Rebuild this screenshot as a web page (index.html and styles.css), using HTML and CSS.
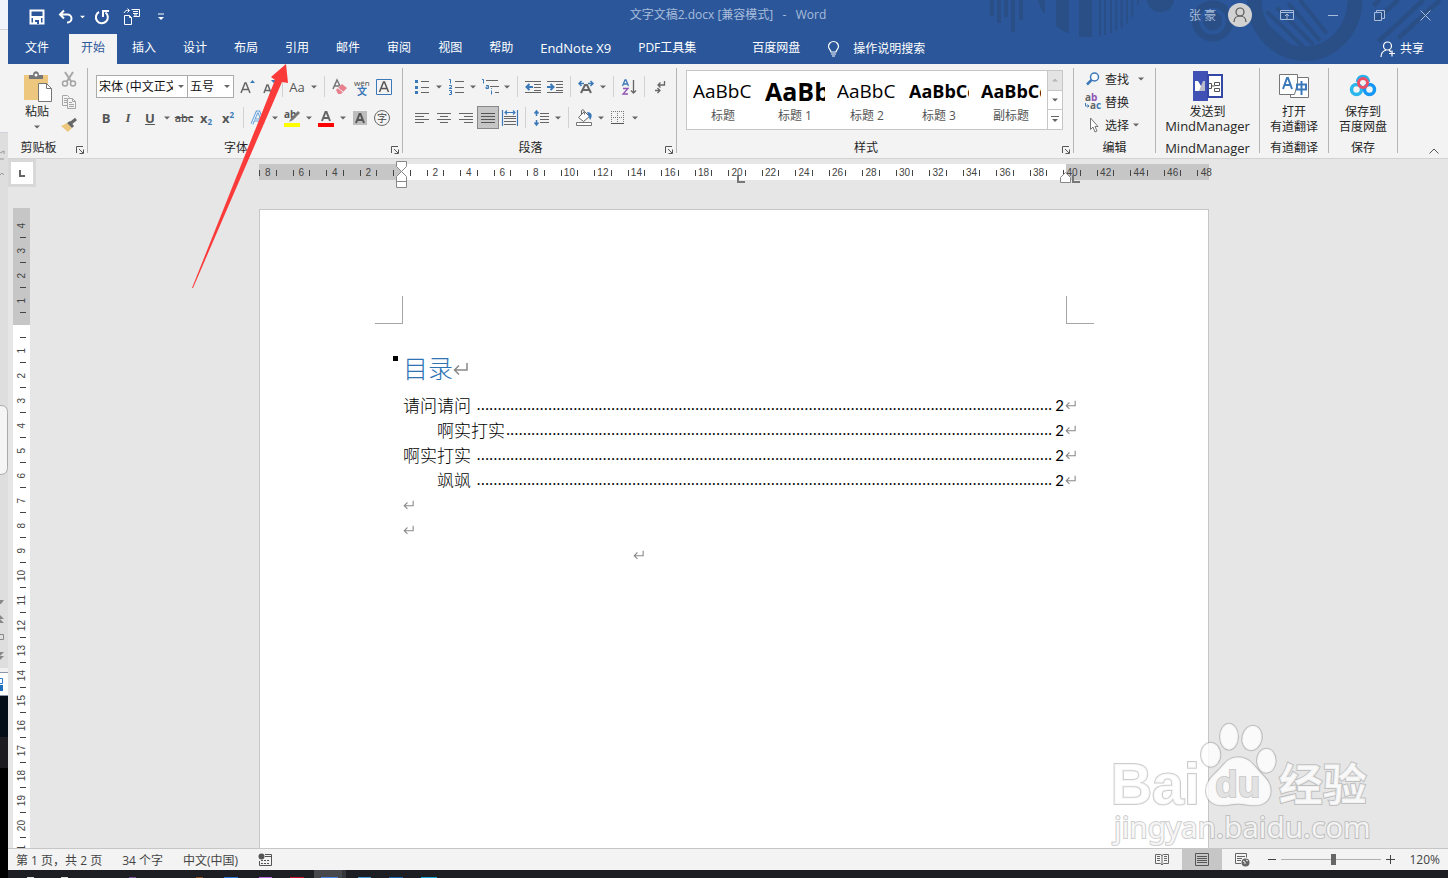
FILE: index.html
```html
<!DOCTYPE html>
<html lang="zh-CN">
<head>
    <meta charset="UTF-8">
    <meta name="viewport" content="width=device-width, initial-scale=1.0">
    <title>文字文稿2.docx - Word</title>
    <link rel="stylesheet" href="styles.css">
</head>
<body>
    <!-- shared symbols -->
    <svg class="defs" aria-hidden="true">
        <symbol id="ret" viewBox="0 0 15 14"><path d="M14 1v7H1.500M6 3.500L1.500 8L6 12.500" fill="none" stroke="currentColor" stroke-width="1.500"/></symbol>
        <symbol id="down" viewBox="0 0 6 4"><path d="M0 .500h6L3 3.500z" fill="currentColor"/></symbol>
        <symbol id="launch" viewBox="0 0 8 8"><path d="M.500 7V.500H7M3 3l4 4M7.500 3.500v4h-4" fill="none" stroke="currentColor"/></symbol>
    </svg>

    <aside class="behind">
        <svg width="8" height="878" viewBox="0 0 8 878">
            <path d="M0 0h8v30H0z" fill="#f2f4fb"/>
            <path d="M0 30h8v103H0z" fill="#f3f3f3"/>
            <path d="M0 29h8v1H0zM0 132h8v1H0z" fill="#cfd2d8"/>
            <path d="M0 133h8v535H0z" fill="#dedede"/>
            <path d="M0 153l4-2v3M0 159h4M0 175l2-2 2 2" fill="none" stroke="#999"/>
            <path d="M0 405.500c5 0 7.500 2 7.500 7v55c0 5-3 7-7.500 7" fill="#f5f5f5" stroke="#aaa"/>
            <path d="M0 600h4l-3 4H0zM0 615l4 4H0zM0 619l4 4H0zM0 652h4l-4 4zM0 656h4l-4 4z" fill="#888"/>
            <path d="M0 634.500h3.500v5H0" fill="none" stroke="#888"/>
            <path d="M0 668h8v5H0z" fill="#f0f0f0"/>
            <path d="M0 673h8v23H0z" fill="#fff"/>
            <path d="M0 672.500h8M0 695.500h8" stroke="#8a97ab"/>
            <path d="M0 678.500h2.500v5H0" fill="none" stroke="#2b7cd3"/>
            <path d="M0 685h3v6H0z" fill="#1e6fc0"/>
            <path d="M0 696h8v41H0z" fill="#020d18"/>
            <path d="M0 737h8v31H0z" fill="#1c1c20"/>
        </svg>
    </aside>

    <div class="window">
        <header class="top">
            <svg class="pattern" viewBox="0 0 1464 192" aria-hidden="true">
                <g fill="#2a4f86">
                    <path d="M90 0h12v48H90zM111 0h12v69h-12zM132 0h12v51h-12zM153 0h12v96h-12zM177 0h12v60h-12z"/>
                    <path d="M234 0h21v43C245 32 238 16 234 0zM288 0h39v100c-14-4-28-12-39-22zM357 0h39v111h-39zM417 0h6v108h-6zM432 0h6v105h-6zM450 0h6v99h-6zM466 0h6v92h-6zM482 0h6v84h-6zM498 0h6v70h-6zM514 0h6v50h-6zM531 0h6v15h-6z"/>
                    <path d="M561 0h81c-3 22-20 37-41 37S564 22 561 0z"/>
                    <circle cx="758" cy="63" r="29"/>
                </g>
                <g fill="none" stroke="#2a4f86">
                    <circle cx="758" cy="63" r="51" stroke-width="22"/>
                    <path d="M883 0a150 160 0 0 0 302 0" stroke-width="44"/>
                    <path d="M900 60l85 75M920 35l110 105M950 22l110 112M985 10l95 112M1020 0l80 100" stroke-width="12"/>
                    <path d="M1240 18l18-18M1245 62l70-62M1255 125L1390 0M1315 115L1440 0" stroke-width="14"/>
                </g>
            </svg>
            <div class="titlebar">
                <div class="quick">
                    <button class="qbtn" aria-label="保存"><svg width="16" height="16" viewBox="0 0 16 16"><path d="M1.500 1.500h13v13h-13zM2 8h12" fill="none" stroke="#fff" stroke-width="2"/><path d="M4 9h8v6H4z" fill="#fff"/><path d="M6 11h4v4H8v-2H6z" fill="#2b579a"/></svg></button>
                    <button class="qbtn" aria-label="撤消"><svg width="16" height="16" viewBox="0 0 16 16"><path d="M6 1.500L2 5.500l4 4M2 5.500h7.500a4 4 0 0 1 0 8H9" fill="none" stroke="#fff" stroke-width="2"/></svg></button>
                    <button class="qcaret" aria-label="撤消列表"><svg width="5" height="4"><use href="#down"/></svg></button>
                    <button class="qbtn" aria-label="重复"><svg width="16" height="16" viewBox="0 0 16 16"><path d="M5 3A6 6 0 1 0 11.500 3.500M9 8V2h6" fill="none" stroke="#fff" stroke-width="2"/></svg></button>
                    <button class="qbtn wide" aria-label="比较文档"><svg width="18" height="18" viewBox="0 0 18 18"><path d="M1.500 7.500h5l2 2v7h-7zM6.500 7.500v2h2M8.500 1.500h8v7h-6M10 3.500h5M10 5.500h5M11 7h3M1 5c1-2.500 3-3 5-2.500M4.500.500l2 2-2 2" fill="none" stroke="#fff"/></svg></button>
                    <button class="qbtn wide" aria-label="自定义快速访问工具栏"><svg width="6" height="8" viewBox="0 0 6 8"><path d="M0 1h6" stroke="#fff"/><path d="M0 4h6L3 7z" fill="#fff"/></svg></button>
                </div>
                <div class="doc-title">文字文稿2.docx [兼容模式]&nbsp;&nbsp; -&nbsp;&nbsp; Word</div>
                <div class="account">
                    <span class="user">张 豪</span>
                    <svg class="avatar" width="24" height="24" viewBox="0 0 24 24"><circle cx="12" cy="12" r="12" fill="#d2d2d2"/><circle cx="12" cy="9" r="4" fill="none" stroke="#555" stroke-width="1.200"/><path d="M6 19c0-8 12-8 12 0" fill="none" stroke="#555" stroke-width="1.200"/></svg>
                    <button class="winbtn" aria-label="功能区显示选项"><svg width="14" height="12" viewBox="0 0 14 12"><path d="M.500 1.500h13v9H.500zM.500 3.500h13M7 10V5M5 7l2-2 2 2" fill="none" stroke="currentColor"/></svg></button>
                    <button class="winbtn" aria-label="最小化"><svg width="10" height="12" viewBox="0 0 10 12"><path d="M0 6.500h10" stroke="currentColor"/></svg></button>
                    <button class="winbtn" aria-label="还原"><svg width="11" height="11" viewBox="0 0 11 11"><path d="M.500 2.500h7v8h-7zM2.500 2.500v-2h8v8h-3" fill="none" stroke="currentColor"/></svg></button>
                    <button class="winbtn" aria-label="关闭"><svg width="11" height="11" viewBox="0 0 11 11"><path d="M.500.500l10 10M10.500.500l-10 10" stroke="currentColor"/></svg></button>
                </div>
            </div>
            <nav class="tabs">
                <a href="#" class="file">文件</a>
                <a href="#" class="active">开始</a>
                <a href="#">插入</a>
                <a href="#">设计</a>
                <a href="#">布局</a>
                <a href="#">引用</a>
                <a href="#">邮件</a>
                <a href="#">审阅</a>
                <a href="#">视图</a>
                <a href="#">帮助</a>
                <a href="#" class="latin">EndNote X9</a>
                <a href="#">PDF工具集</a>
                <a href="#" class="pan">百度网盘</a>
                <a href="#" class="tell"><svg width="13" height="16" viewBox="0 0 13 16"><path d="M4 11C4 9 1.500 8 1.500 5.500a5 5 0 0 1 10 0C11.500 8 9 9 9 11zM4 13h5M5 15h3" fill="none" stroke="#fff" stroke-width="1.200"/></svg>操作说明搜索</a>
                <a href="#" class="share"><svg width="16" height="17" viewBox="0 0 16 17"><circle cx="7.500" cy="5" r="4" fill="none" stroke="#fff" stroke-width="1.200"/><path d="M1 16c0-3 2-6 5-7M9 9l2 2M12 9.500v6M9 12.500h6" fill="none" stroke="#fff" stroke-width="1.200"/></svg>共享</a>
            </nav>
        </header>

        <section class="ribbon">
            <div class="group clipboard">
                <div class="body">
                    <button class="big paste">
                        <svg width="30" height="32" viewBox="0 0 30 32"><path d="M2 4h24v25H2z" fill="#ecc77d"/><path d="M7 8V4h4c0-5 6-5 6 0h4v4z" fill="#767676"/><circle cx="14" cy="4" r="1.500" fill="#fff"/><path d="M16.500 12.500h8l5 5v13h-13z" fill="#fff" stroke="#767676"/><path d="M24.500 12.500v5h5" fill="none" stroke="#767676"/></svg>
                        <span>粘贴</span>
                        <svg class="caret" width="6" height="4"><use href="#down"/></svg>
                    </button>
                    <div class="stack">
                        <button class="tool" aria-label="剪切"><svg width="16" height="16" viewBox="0 0 16 16"><path d="M4 1l6.500 10M12 1L5.500 11" stroke="#a6a6a6" stroke-width="2"/><circle cx="4" cy="12.500" r="2.500" fill="none" stroke="#a6a6a6" stroke-width="1.500"/><circle cx="12" cy="12.500" r="2.500" fill="none" stroke="#a6a6a6" stroke-width="1.500"/></svg></button>
                        <button class="tool" aria-label="复制"><svg width="16" height="16" viewBox="0 0 16 16"><path d="M6 11.500H1.500v-10h5l2 2M3 4.500h3M3 6.500h3M3 8.500h3M6.500 4.500h5l3 3v7h-8zM11.500 4.500v3h3M8 8.500h3M8 10.500h5M8 12.500h5" fill="none" stroke="#a6a6a6"/></svg></button>
                        <button class="tool" aria-label="格式刷"><svg width="18" height="16" viewBox="0 0 18 16"><path d="M1 9l6-3 5 5-4 4z" fill="#ecc77d"/><path d="M7 6l3-2 4 5-2 2z" fill="#666"/><path d="M11 6l5-4" stroke="#666" stroke-width="3"/></svg></button>
                    </div>
                </div>
                <div class="label">剪贴板<button class="launcher" aria-label="剪贴板窗格"><svg width="8" height="8"><use href="#launch"/></svg></button></div>
            </div>

            <div class="group font">
                <div class="rows">
                    <div class="row">
                        <div class="combo name"><select aria-label="字体"><option>宋体 (中文正文)</option></select></div>
                        <div class="combo size"><select aria-label="字号"><option>五号</option></select></div>
                        <button class="tool" aria-label="增大字号"><svg width="16" height="18" viewBox="0 0 16 18"><path d="M2 15L6 5h1l4 10M3.500 11.500h6" fill="none" stroke="#666" stroke-width="1.500"/><path d="M11 5h5l-2.500-3z" fill="#3c79b8"/></svg></button>
                        <button class="tool" aria-label="减小字号"><svg width="16" height="18" viewBox="0 0 16 18"><path d="M3 15L6 7h1l3 8M4 12.500h5" fill="none" stroke="#666" stroke-width="1.500"/><path d="M10 2h5l-2.500 3z" fill="#3c79b8"/></svg></button>
                        <i class="sep tight"></i>
                        <button class="tool text" aria-label="更改大小写">Aa</button>
                        <button class="drop" aria-label="大小写选项"><svg width="6" height="4"><use href="#down"/></svg></button>
                        <i class="sep"></i>
                        <button class="tool" aria-label="清除格式"><svg width="16" height="16" viewBox="0 0 16 16"><path d="M1 10l4-9 3 6M2.500 7H7" fill="none" stroke="#767676" stroke-width="1.500"/><path d="M4 11l6-6 5 4-6 6H6z" fill="#e8808e"/><path d="M6 9l5 4" stroke="#f2f2f2"/></svg></button>
                        <button class="tool" aria-label="拼音指南"><svg width="18" height="18" viewBox="0 0 18 18"><text x="1" y="8" class="t-wen">wén</text><text x="4" y="17" class="t-han">文</text></svg></button>
                        <button class="tool" aria-label="字符边框"><svg width="16" height="16" viewBox="0 0 16 16"><path d="M.500.500h15v15H.500z" fill="none" stroke="#3c79b8"/><path d="M3.500 13l4-10h1l4 10M5 9.500h6" fill="none" stroke="#555" stroke-width="1.500"/></svg></button>
                    </div>
                    <div class="row">
                        <button class="tool text bold">B</button>
                        <button class="tool text italic">I</button>
                        <button class="tool text under">U</button>
                        <button class="drop" aria-label="下划线选项"><svg width="6" height="4"><use href="#down"/></svg></button>
                        <button class="tool text strike">abc</button>
                        <button class="tool text bold" aria-label="下标">x<sub>2</sub></button>
                        <button class="tool text bold" aria-label="上标">x<sup>2</sup></button>
                        <i class="sep near"></i>
                        <button class="tool" aria-label="文本效果"><svg width="16" height="16" viewBox="0 0 16 16"><path d="M2 14L7 2h2l4 12M4.500 10h7" fill="none" stroke="#6ba3d8" stroke-width="3"/><path d="M2 14L7 2h2l4 12M4.500 10h7" fill="none" stroke="#f2f8ff"/></svg></button>
                        <button class="drop" aria-label="文本效果选项"><svg width="6" height="4"><use href="#down"/></svg></button>
                        <button class="tool" aria-label="突出显示"><svg width="18" height="18" viewBox="0 0 18 18"><text x="1" y="9" class="t-ab">ab</text><path d="M6 13l2-4 7-7 2 2-7 7z" fill="#767676"/><path d="M1 14h16v4H1z" fill="#ff0"/></svg></button>
                        <button class="drop" aria-label="突出显示选项"><svg width="6" height="4"><use href="#down"/></svg></button>
                        <button class="tool" aria-label="字体颜色"><svg width="16" height="18" viewBox="0 0 16 18"><path d="M4 12L7.500 3h1L12 12M5 9h6" fill="none" stroke="#666" stroke-width="2"/><path d="M0 14h16v4H0z" fill="#f00"/></svg></button>
                        <button class="drop" aria-label="颜色选项"><svg width="6" height="4"><use href="#down"/></svg></button>
                        <button class="tool" aria-label="字符底纹"><svg width="14" height="14" viewBox="0 0 14 14"><path d="M0 0h14v14H0z" fill="#bdbdbd"/><path d="M3 12L6.500 3h1L11 12M4 9h6" fill="none" stroke="#555" stroke-width="2"/></svg></button>
                        <button class="tool" aria-label="带圈字符"><svg width="16" height="16" viewBox="0 0 16 16"><circle cx="8" cy="8" r="7.500" fill="none" stroke="#666"/><text x="3" y="12" class="t-zi">字</text></svg></button>
                    </div>
                </div>
                <div class="label">字体<button class="launcher" aria-label="字体设置"><svg width="8" height="8"><use href="#launch"/></svg></button></div>
            </div>

            <div class="group para">
                <div class="rows">
                    <div class="row">
                        <button class="tool" aria-label="项目符号"><svg width="14" height="16" viewBox="0 0 14 16"><path d="M6 2.500h8M6 8.500h8M6 13.500h8" stroke="#666"/><path d="M0 1h3v3H0zM0 7h3v3H0zM0 12h3v3H0z" fill="#3c79b8"/></svg></button>
                        <button class="drop" aria-label="项目符号选项"><svg width="6" height="4"><use href="#down"/></svg></button>
                        <button class="tool" aria-label="编号"><svg width="15" height="17" viewBox="0 0 15 17"><path d="M6 3.500h9M6 9.500h9M6 14.500h9" stroke="#666"/><path d="M0 1.500h1.500v4M0 7.500h2.500v1.500L0 10.500h3M0 12.500h2.500v4H0M1 14.500h1.500" fill="none" stroke="#3c79b8"/></svg></button>
                        <button class="drop" aria-label="编号选项"><svg width="6" height="4"><use href="#down"/></svg></button>
                        <button class="tool" aria-label="多级列表"><svg width="17" height="16" viewBox="0 0 17 16"><path d="M4 1.500h12M8 7.500h9M13 13.500h4" stroke="#666"/><path d="M0 .500h1.500v4M4 6.500h2.500v3H4v-1.500h2.500M9 9.500h.900M9.500 11.500v4" fill="none" stroke="#3c79b8"/></svg></button>
                        <button class="drop" aria-label="多级列表选项"><svg width="6" height="4"><use href="#down"/></svg></button>
                        <i class="sep"></i>
                        <button class="tool" aria-label="减少缩进"><svg width="16" height="14" viewBox="0 0 16 14"><path d="M0 1.500h16M9 4.500h7M9 7.500h7M9 10.500h7M0 12.500h16" stroke="#666"/><path d="M8 7H2M4.500 4L1.500 7l3 3" fill="none" stroke="#3c79b8" stroke-width="2"/></svg></button>
                        <button class="tool" aria-label="增加缩进"><svg width="16" height="14" viewBox="0 0 16 14"><path d="M0 1.500h16M9 4.500h7M9 7.500h7M9 10.500h7M0 12.500h16" stroke="#666"/><path d="M0 7h6M3.500 4l3 3-3 3" fill="none" stroke="#3c79b8" stroke-width="2"/></svg></button>
                        <i class="sep"></i>
                        <button class="tool" aria-label="中文版式"><svg width="16" height="14" viewBox="0 0 16 14"><path d="M3 13l4-8h2l4 8M5 10h6" fill="none" stroke="#666" stroke-width="2"/><path d="M1 3.500h5M10 3.500h5M3.500 1L1 3.500 3.500 6M12.500 1L15 3.500 12.500 6" fill="none" stroke="#3c79b8" stroke-width="1.500"/></svg></button>
                        <button class="drop" aria-label="中文版式选项"><svg width="6" height="4"><use href="#down"/></svg></button>
                        <i class="sep"></i>
                        <button class="tool" aria-label="排序"><svg width="14" height="16" viewBox="0 0 14 16"><path d="M.500 7L3 1h1l2.500 6M1.500 5h4" fill="none" stroke="#3c79b8" stroke-width="1.300"/><path d="M1 9.500h5L1 15h5" fill="none" stroke="#9055b5" stroke-width="1.300"/><path d="M11.500 1v13M9 11.500l2.500 2.500 2.500-2.500" fill="none" stroke="#666" stroke-width="1.300"/></svg></button>
                        <i class="sep"></i>
                        <button class="tool" aria-label="显示编辑标记"><svg width="12" height="14" viewBox="0 0 12 14"><path d="M10.500 1v4H4M6.500 2.500L4 5l2.500 2.500M1 10.500h5M3.500 8L6 10.500 3.500 13" fill="none" stroke="#666" stroke-width="1.300"/></svg></button>
                    </div>
                    <div class="row">
                        <button class="tool" aria-label="左对齐"><svg width="14" height="12" viewBox="0 0 14 12"><path d="M0 1.500h14M0 4.500h9M0 7.500h14M0 10.500h9" stroke="#666"/></svg></button>
                        <button class="tool" aria-label="居中"><svg width="14" height="12" viewBox="0 0 14 12"><path d="M0 1.500h14M3 4.500h8M0 7.500h14M3 10.500h8" stroke="#666"/></svg></button>
                        <button class="tool" aria-label="右对齐"><svg width="14" height="12" viewBox="0 0 14 12"><path d="M0 1.500h14M5 4.500h9M0 7.500h14M5 10.500h9" stroke="#666"/></svg></button>
                        <button class="tool pressed" aria-label="两端对齐"><svg width="14" height="12" viewBox="0 0 14 12"><path d="M0 1.500h14M0 4.500h14M0 7.500h14M0 10.500h14" stroke="#555"/></svg></button>
                        <button class="tool" aria-label="分散对齐"><svg width="16" height="16" viewBox="0 0 16 16"><path d="M2 6.500h12M2 8.500h12M2 11.500h12M2 14.500h12" stroke="#666"/><path d="M.500 0v16M15.500 0v16M3 2.500h10M5 .500l-2 2 2 2M11 .500l2 2-2 2" fill="none" stroke="#3c79b8" stroke-width="1.200"/></svg></button>
                        <i class="sep"></i>
                        <button class="tool" aria-label="行距"><svg width="15" height="16" viewBox="0 0 15 16"><path d="M6 3.500h9M6 6.500h9M6 9.500h9M6 12.500h9" stroke="#666"/><path d="M2.500 1v5M2.500 10v5M.500 3.500l2-2.500 2 2.500M.500 12.500l2 2.500 2-2.500" fill="none" stroke="#3c79b8" stroke-width="1.500"/></svg></button>
                        <button class="drop" aria-label="行距选项"><svg width="6" height="4"><use href="#down"/></svg></button>
                        <i class="sep"></i>
                        <button class="tool" aria-label="底纹"><svg width="17" height="17" viewBox="0 0 17 17"><path d="M2.500 8.500l6-6 5 5-6 5z" fill="#fff" stroke="#666"/><path d="M5.500 5V1.500c2-2 3 0 3 4" fill="none" stroke="#666"/><path d="M11 3c5 0 6 4 3 8z" fill="#3c79b8"/><path d="M.500 13.500h15v3H.500z" fill="#fff" stroke="#767676"/></svg></button>
                        <button class="drop" aria-label="底纹选项"><svg width="6" height="4"><use href="#down"/></svg></button>
                        <button class="tool" aria-label="边框"><svg width="14" height="14" viewBox="0 0 14 14"><path d="M0 .500h13M0 6.500h13M.500 0v13M6.500 0v13M12.500 0v13" stroke="#767676" stroke-dasharray="1 1"/><path d="M0 12.500h13" stroke="#555"/></svg></button>
                        <button class="drop" aria-label="边框选项"><svg width="6" height="4"><use href="#down"/></svg></button>
                    </div>
                </div>
                <div class="label">段落<button class="launcher" aria-label="段落设置"><svg width="8" height="8"><use href="#launch"/></svg></button></div>
            </div>

            <div class="group styles">
                <div class="gallery">
                    <button class="style"><b class="normal">AaBbC</b><span>标题</span></button>
                    <button class="style"><b class="h1">AaBb</b><span>标题 1</span></button>
                    <button class="style"><b class="normal">AaBbC</b><span>标题 2</span></button>
                    <button class="style"><b>AaBbCc</b><span>标题 3</span></button>
                    <button class="style"><b>AaBbCc</b><span>副标题</span></button>
                    <div class="scroll">
                        <button class="off" aria-label="上一行"><svg width="6" height="4" viewBox="0 0 6 4"><path d="M0 3.500h6L3 .500z" fill="#b5b5b5"/></svg></button>
                        <button aria-label="下一行"><svg width="6" height="4"><use href="#down"/></svg></button>
                        <button aria-label="其他"><svg width="8" height="7" viewBox="0 0 8 7"><path d="M0 .500h8" stroke="#666"/><path d="M1 3h6L4 6z" fill="#666"/></svg></button>
                    </div>
                </div>
                <div class="label">样式<button class="launcher" aria-label="样式窗格"><svg width="8" height="8"><use href="#launch"/></svg></button></div>
            </div>

            <div class="group edit">
                <div class="stack">
                    <button class="line"><svg width="14" height="14" viewBox="0 0 14 14"><circle cx="8.500" cy="5" r="4" fill="#fff" stroke="#3c79b8" stroke-width="1.500"/><path d="M5.500 8L1 12.500" stroke="#3c79b8" stroke-width="2.500"/></svg>查找<svg class="far" width="6" height="4"><use href="#down"/></svg></button>
                    <button class="line"><svg width="16" height="16" viewBox="0 0 16 16"><text x="0" y="7" class="t-rep">a<tspan fill="#9055b5">b</tspan></text><text x="5" y="15" class="t-rep">a<tspan fill="#3c79b8">c</tspan></text><path d="M.500 9v3H4M2.500 10.500L4 12l-1.500 1.500" fill="none" stroke="#3c79b8"/></svg>替换</button>
                    <button class="line"><svg width="14" height="16" viewBox="0 0 14 16"><path d="M4.500 1v11.500L7 10l2 5 2-1-2-4.500h3z" fill="#fff" stroke="#767676"/></svg>选择<svg width="6" height="4"><use href="#down"/></svg></button>
                </div>
                <div class="label">编辑</div>
            </div>

            <div class="group mind">
                <button class="big">
                    <svg width="30" height="30" viewBox="0 0 30 30"><path d="M0 0h15v30H0z" fill="#3f51b5"/><path d="M15 4h14v22H15z" fill="#fff" stroke="#3447a5" stroke-width="2"/><path d="M2 10h3l3 5v5H2z" fill="#fff"/><path d="M6 20l4-10h2v10z" fill="#b9bccb"/><path d="M15.500 12.500h3v5h-3M18.500 15h3M21.500 11.500h5v3h-5zM21.500 17.500h5v3h-5z" fill="none" stroke="#555"/></svg>
                    <span>发送到</span><span class="latin">MindManager</span>
                </button>
                <div class="label latin">MindManager</div>
            </div>

            <div class="group addin">
                <button class="big">
                    <svg width="30" height="30" viewBox="0 0 30 30"><path d="M11.500 6.500h18v20h-18z" fill="#fff" stroke="#767676"/><path d="M.500 3.500h18v9l-3 11H.500z" fill="#fff" stroke="#767676"/><path d="M4 18L8 7h1l4 11M5.500 14h6" fill="none" stroke="#3c79b8" stroke-width="2"/><path d="M18 13.500h9v5h-9zM22.500 10v14" fill="none" stroke="#3c79b8" stroke-width="2"/></svg>
                    <span>打开</span><span>有道翻译</span>
                </button>
                <div class="label">有道翻译</div>
            </div>

            <div class="group addin">
                <button class="big">
                    <svg width="28" height="30" viewBox="0 0 28 30"><g fill="none" stroke-width="3.500"><circle cx="7.500" cy="18.500" r="5" stroke="#2cb6ee"/><circle cx="20.500" cy="18.500" r="5" stroke="#1497f5"/><path d="M8.500 11c1-7.500 10-7.500 11 0" stroke="#27b2ee"/><circle cx="14" cy="12" r="4.500" stroke="#ee4f67" stroke-width="3"/></g></svg>
                    <span>保存到</span><span>百度网盘</span>
                </button>
                <div class="label">保存</div>
            </div>
            <button class="collapse" aria-label="折叠功能区"><svg width="10" height="6" viewBox="0 0 10 6"><path d="M.500 5.500L5 1l4.500 4.500" fill="none" stroke="#555"/></svg></button>
        </section>

        <main class="workspace">
            <div class="side">
                <button class="tabstop" aria-label="制表符"><svg width="6" height="7" viewBox="0 0 6 7"><path d="M1 0v6h5" fill="none" stroke="#666" stroke-width="2"/></svg></button>
                <ol class="vruler" id="vruler"></ol>
            </div>
            <div class="canvas">
                <div class="hruler">
                    <ol class="marks" id="hruler"></ol>
                    <svg class="mark indent" width="12" height="28" viewBox="0 0 12 28"><path d="M.500.500h10v5l-5 5 5 5v11H.500v-11l5-5-5-5zM.500 20.500h10" fill="#fff" stroke="#888"/></svg>
                    <svg class="mark stop" width="8" height="8" viewBox="0 0 8 8"><path d="M1 0v7h7" fill="none" stroke="#777" stroke-width="2"/></svg>
                    <svg class="mark right" width="20" height="12" viewBox="0 0 20 12"><path d="M.500 10.500v-5l5-5 5 5v5z" fill="#fff" stroke="#888"/><path d="M13 3v7h7" fill="none" stroke="#777" stroke-width="2"/></svg>
                </div>
                <article class="page">
                    <div class="corners"><i class="left"></i><i class="right"></i></div>
                    <div class="content">
                        <h1><i class="bullet"></i>目录<svg width="15" height="14"><use href="#ret"/></svg></h1>
                        <div class="toc"><a href="#">请问请问</a><span class="dots gap"></span><span class="num">2</span><svg width="11" height="10"><use href="#ret"/></svg></div>
                        <div class="toc sub"><a href="#">啊实打实</a><span class="dots"></span><span class="num">2</span><svg width="11" height="10"><use href="#ret"/></svg></div>
                        <div class="toc"><a href="#">啊实打实</a><span class="dots gap"></span><span class="num">2</span><svg width="11" height="10"><use href="#ret"/></svg></div>
                        <div class="toc sub"><a href="#">飒飒</a><span class="dots gap"></span><span class="num">2</span><svg width="11" height="10"><use href="#ret"/></svg></div>
                        <p><svg width="11" height="10"><use href="#ret"/></svg></p>
                        <p><svg width="11" height="10"><use href="#ret"/></svg></p>
                        <p class="far"><svg width="11" height="10"><use href="#ret"/></svg></p>
                    </div>
                </article>
            </div>
        </main>

        <footer class="status">
            <span>第 1 页，共 2 页</span>
            <span>34 个字</span>
            <span>中文(中国)</span>
            <svg width="14" height="14" viewBox="0 0 14 14"><circle cx="3.500" cy="3.500" r="3" fill="#555"/><path d="M7 1.500h6.500v11h-12V8M7 3.500h6" fill="none" stroke="#555"/><path d="M3 7h2v1H3zM6 7h2v1H6zM9 7h2v1H9zM3 10h2v1H3zM6 10h2v1H6zM9 10h2v1H9z" fill="#555"/></svg>
            <div class="views">
                <button aria-label="阅读视图"><svg width="14" height="13" viewBox="0 0 14 13"><path d="M.500 1.500h5l1.500 1 1.500-1h5v9h-5l-1.500 1.500-1.500-1.500h-5zM7 2v10M2 3.500h3M2 5.500h3M2 7.500h3M9 3.500h3M9 5.500h3M9 7.500h3" fill="none" stroke="#666"/></svg></button>
                <button class="on" aria-label="页面视图"><svg width="14" height="13" viewBox="0 0 14 13"><path d="M.500.500h13v12H.500zM2 3.500h10M2 5.500h10M2 7.500h10M2 9.500h10" fill="none" stroke="#555"/></svg></button>
                <button aria-label="Web 版式"><svg width="15" height="14" viewBox="0 0 15 14"><path d="M6 10.500H.500V.500h11v4M2 3.500h8M2 5.500h5M2 7.500h4" fill="none" stroke="#666"/><circle cx="10.500" cy="9.500" r="4" fill="#666"/><path d="M8 8l2 1v2M11 7l2 1" stroke="#f2f2f2" fill="none"/></svg></button>
            </div>
            <div class="zoom">
                <button aria-label="缩小"><svg width="8" height="9" viewBox="0 0 8 9"><path d="M0 4.500h8" stroke="#444"/></svg></button>
                <input type="range" min="0" max="100" value="53" aria-label="缩放">
                <button aria-label="放大"><svg width="9" height="9" viewBox="0 0 9 9"><path d="M0 4.500h9M4.500 0v9" stroke="#444"/></svg></button>
                <span class="percent">120%</span>
            </div>
        </footer>
        <div class="taskbar">
            <svg width="440" height="8" viewBox="0 0 440 8">
                <path d="M306 0h28v8h-28z" fill="#46484c"/><path d="M334 0h4v8h-4z" fill="#34363a"/>
                <path d="M19 7h7v1h-7zM53 7h7v1h-7z" fill="#ddd"/><path d="M121 7h7v1h-7z" fill="#7d4f94"/><path d="M188 7h7v1h-7z" fill="#8a4a1c"/><path d="M216 7h14v1h-14z" fill="#2d74d8"/><path d="M251 7h13v1h-13z" fill="#b668dc"/><path d="M282 7h14v1h-14z" fill="#c8102e"/><path d="M313 7h17v1h-17z" fill="#4e84e6"/><path d="M350 7h13v1h-13z" fill="#4a9ad4"/><path d="M381 7h14v1h-14z" fill="#1a62a8"/><path d="M413 7h16v1h-16z" fill="#1ba5d8"/>
            </svg>
        </div>
    </div>

    <!-- pointer to the 引用 tab -->
    <svg class="arrow" width="100" height="226" viewBox="190 63 100 226" aria-hidden="true"><path d="M286 64l2 19-6-1L193 288h-1l83-208-4-3z" fill="#fb3a3a"/></svg>

    <svg class="watermark" width="263" height="130" viewBox="60 30 789 390" aria-hidden="true">
        <g class="wm">
            <text x="62" y="282" class="wm-bai">Bai</text>
            <ellipse cx="362" cy="134" rx="29" ry="36"/>
            <ellipse cx="417" cy="80" rx="27" ry="39"/>
            <ellipse cx="486" cy="84" rx="29" ry="37" transform="rotate(12 486 84)"/>
            <ellipse cx="529" cy="152" rx="28" ry="36"/>
            <path d="M444 142c-30 0-42 22-58 38-20 20-38 35-38 62 0 28 20 44 48 44 18 0 32-5 48-5s30 5 50 5c28 0 48-16 48-44 0-27-18-40-36-60-16-18-30-40-62-40z"/>
            <text x="376" y="262" class="wm-du">du</text>
            <text x="566" y="272" class="wm-cn">经验</text>
            <text x="72" y="384" class="wm-url">jingyan.baidu.com</text>
        </g>
    </svg>

    <script>
        // horizontal ruler, two characters per cell
        var h = document.getElementById("hruler");
        for (var i = -8; i <= 48; i += 2) {
            var li = document.createElement("li");
            li.innerHTML = "<span>" + (i === 0 ? "" : Math.abs(i)) + "</span>";
            h.appendChild(li);
        }

        // vertical ruler
        var v = document.getElementById("vruler");
        for (var j = -4; j <= 21; j++) {
            var item = document.createElement("li");
            item.innerHTML = "<span>" + (j === 0 ? "" : Math.abs(j)) + "</span>";
            v.appendChild(item);
        }

        // dot leaders of the table of contents, as many as fit
        document.querySelectorAll(".dots").forEach(function (el) {
            var dots = document.createElement("span");
            dots.textContent = ".".repeat(100);
            el.appendChild(dots);
            var each = dots.getBoundingClientRect().width / 100;
            dots.textContent = ".".repeat(Math.floor(el.clientWidth / each));
        });
    </script>
</body>
</html>
```
FILE: styles.css
```css
* {
    box-sizing: border-box;
}

body {
    margin: 0;
    height: 100vh;
    display: flex;
    overflow: hidden;
    background-color: #000;
    font-family: "Open Sans", "Noto Sans CJK SC", sans-serif;
    font-size: 12px;
    color: #262626;
}

button {
    font: inherit;
    color: inherit;
    background: none;
    border: none;
    padding: 0;
    display: flex;
    align-items: center;
    justify-content: center;
}

a {
    color: inherit;
    text-decoration: none;
}

svg {
    flex: none;
    overflow: visible;
}

ol {
    list-style: none;
    margin: 0;
    padding: 0;
}

.defs {
    position: absolute;
    width: 0;
    height: 0;
}

.behind {
    width: 8px;
    flex: none;
}

.window {
    flex: 1;
    min-width: 0;
    display: flex;
    flex-direction: column;
    background-color: #e6e6e6;
}

/* title bar and tabs */
.top {
    position: relative;
    flex: none;
    background-color: #2b579a;
    color: #fff;
}

.pattern {
    position: absolute;
    right: 0;
    top: 0;
    width: 488px;
    height: 64px;
    overflow: hidden;
}

.titlebar {
    position: relative;
    height: 34px;
    display: grid;
    grid-template-columns: 1fr auto 1fr;
}

.quick {
    display: flex;
    align-items: center;
    padding-left: 18px;
}

.qbtn {
    width: 22px;
    height: 30px;
    margin-right: 7px;
}

.qbtn.wide {
    width: 24px;
    margin-right: 5px;
}

.qcaret {
    width: 8px;
    height: 30px;
    margin-left: -6px;
    margin-right: 5px;
}

.doc-title {
    line-height: 30px;
    color: #a9bddb;
}

.account {
    display: flex;
    align-items: center;
    justify-content: flex-end;
    height: 30px;
    color: #a9bddb;
}

.avatar {
    margin: 0 12px;
}

.winbtn {
    width: 46px;
    height: 30px;
}

.tabs {
    position: relative;
    height: 30px;
    display: flex;
    gap: 3px;
    padding-left: 5px;
    line-height: 28px;
}

.tabs a {
    padding: 0 12px;
    white-space: nowrap;
}

.tabs .file {
    margin-right: 5px;
}

.tabs .active {
    background-color: #f3f3f3;
    color: #2b579a;
}

.tabs .pan {
    margin-left: 29px;
}

.tabs .tell,
.tabs .share {
    display: flex;
    align-items: center;
    gap: 13px;
}

.tabs .share {
    margin-left: auto;
    gap: 4px;
    padding-right: 24px;
}

/* ribbon */
.ribbon {
    flex: none;
    height: 95px;
    display: flex;
    background-color: #f3f3f3;
    border-bottom: 1px solid #d2d2d2;
}

.group {
    position: relative;
    display: flex;
    flex-direction: column;
    flex: none;
    margin: 4px 0 5px;
    border-right: 1px solid #b5b5b5;
}

.clipboard { width: 80px; }
.font { width: 315px; }
.para { width: 274px; }
.styles { width: 397px; }
.edit { width: 82px; }
.mind { width: 104px; }
.addin { width: 69px; }

.label {
    margin-top: auto;
    height: 13px;
    line-height: 16px;
    text-align: center;
    white-space: nowrap;
}

.clipboard .label,
.font .label,
.para .label,
.styles .label {
    padding-right: 18px;
}

.latin {
    font-size: 13px;
}

.launcher {
    position: absolute;
    right: 3px;
    bottom: -1px;
    width: 9px;
    height: 9px;
    color: #555;
}

.body {
    display: flex;
    padding-left: 8px;
}

.rows {
    display: flex;
    flex-direction: column;
    gap: 8px;
    padding: 7px 0 0 7px;
}

.para .rows {
    padding-left: 8px;
}

.row {
    display: flex;
    align-items: center;
    height: 23px;
}

.tool {
    width: 22px;
    height: 23px;
    flex: none;
}

.tool.pressed {
    background-color: #c6c6c6;
    border: 1px solid #888;
}

.tool.text {
    font-size: 13px;
    line-height: 18px;
    color: #555;
}

.tool.bold,
.tool.under {
    font-weight: bold;
}

.tool.under {
    text-decoration: underline;
}

.tool.italic {
    font-family: "Liberation Serif", serif;
    font-style: italic;
    font-weight: bold;
}

.tool.strike {
    font-size: 11px;
    font-weight: 600;
    text-decoration: line-through;
}

.tool sub,
.tool sup {
    font-size: 8px;
    line-height: 8px;
    color: #3c79b8;
}

.tool sub {
    margin-top: 8px;
}

.tool sup {
    margin-bottom: 6px;
}

.drop {
    width: 12px;
    height: 23px;
    color: #666;
}

.sep {
    width: 1px;
    height: 21px;
    margin: 0 4px;
    background-color: #d2d2d2;
}

.sep.tight {
    margin: 0 3px 0 2px;
}

.sep.near {
    margin-right: 3px;
}

.combo {
    position: relative;
    height: 23px;
}

.combo select {
    appearance: none;
    width: 100%;
    height: 100%;
    padding: 0 14px 0 2px;
    border: 1px solid #ababab;
    border-radius: 0;
    background-color: #fff;
    font: inherit;
    color: #111;
}

.combo::after {
    content: "";
    position: absolute;
    right: 4px;
    top: 10px;
    border: 3px solid transparent;
    border-top-color: #666;
    border-bottom: none;
}

.combo.name {
    width: 92px;
    margin-left: 1px;
}

.combo.size {
    width: 47px;
    margin-left: -1px;
    margin-right: 2px;
}

.t-wen { font-size: 8px; fill: #444; }
.t-han { font-size: 10px; font-weight: bold; fill: #3c79b8; }
.t-ab { font-size: 10px; font-weight: bold; fill: #555; }
.t-zi { font-size: 10px; fill: #444; }
.t-rep { font-size: 10px; font-weight: bold; fill: #666; }

.big {
    flex-direction: column;
    justify-content: flex-start;
    padding-top: 3px;
    line-height: 15px;
}

.big svg {
    margin-bottom: 3px;
}

.paste {
    width: 42px;
}

.paste svg {
    margin-bottom: 1px;
}

.big .caret {
    margin: 6px 0 0;
    color: #666;
}

.stack {
    display: flex;
    flex-direction: column;
}

.clipboard .stack,
.edit .stack {
    margin-top: -1px;
}

.line {
    height: 23px;
    justify-content: flex-start;
    gap: 4px;
    padding-left: 12px;
}

.line svg:first-child {
    width: 16px;
    margin-left: -1px;
}

.line .far {
    margin-left: 5px;
}

.line svg:last-child {
    color: #666;
}

.gallery {
    display: flex;
    width: 377px;
    height: 60px;
    margin: 2px 0 0 9px;
    background-color: #fff;
    border: 1px solid #c6c6c6;
}

.style {
    width: 72px;
    flex-direction: column;
    align-items: stretch;
    padding: 0 6px;
    text-align: center;
    color: #555;
}

.style b {
    height: 32px;
    line-height: 32px;
    overflow: hidden;
    font-size: 18px;
    text-align: left;
    white-space: nowrap;
    color: #000;
}

.style .normal {
    font-size: 19px;
    font-weight: normal;
}

.style .h1 {
    font-size: 25px;
}

.style span {
    line-height: 18px;
}

.scroll {
    flex: 1;
    display: flex;
    flex-direction: column;
    border-left: 1px solid #c6c6c6;
}

.scroll button {
    flex: 1;
    border-bottom: 1px solid #c6c6c6;
    color: #666;
}

.scroll button:last-child {
    border-bottom: none;
}

.scroll .off {
    background-color: #e4e4e4;
}

.collapse {
    margin: auto 8px 3px auto;
    width: 12px;
    height: 8px;
}

/* document area */
.workspace {
    flex: 1;
    min-height: 0;
    display: flex;
    overflow: hidden;
}

.side {
    width: 28px;
    flex: none;
    display: flex;
    flex-direction: column;
}

.tabstop {
    width: 28px;
    height: 28px;
    flex: none;
    background-color: #fff;
    border: 3px solid #d8d8d8;
}

.vruler {
    flex: 1;
    min-height: 0;
    width: 17px;
    margin: 21px 0 0 5px;
    padding-top: 5px;
    overflow: hidden;
    background: linear-gradient(#c6c6c6 117px, #fff 117px);
}

.vruler li {
    position: relative;
    height: 25px;
    display: flex;
    align-items: center;
    justify-content: center;
}

.vruler li::after {
    content: "";
    position: absolute;
    bottom: 0;
    left: 7px;
    width: 6px;
    height: 1px;
    background-color: #444;
}

.vruler span {
    writing-mode: vertical-rl;
    transform: rotate(180deg);
    font: 10px/12px "Liberation Sans", sans-serif;
    color: #444;
}

.canvas {
    flex: 1;
    min-width: 0;
    padding-right: 16px;
    display: flex;
    flex-direction: column;
    align-items: center;
}

.hruler {
    position: relative;
    flex: none;
    width: 950px;
    height: 16px;
    margin: 5px 0 29px;
    background: linear-gradient(to right, #c6c6c6 142px, #fff 142px, #fff calc(100% - 143px), #c6c6c6 calc(100% - 143px));
}

.marks {
    display: flex;
    margin: 0 -14px 0 -8px;
}

.marks li {
    flex: 1;
    display: flex;
    align-items: center;
    justify-content: space-between;
    height: 18px;
    padding: 0 8px;
    font: 10px/18px "Liberation Sans", sans-serif;
    color: #444;
}

.marks li::before,
.marks li::after {
    content: "";
    width: 1px;
    height: 6px;
    background-color: #444;
}

.marks li:last-child::after {
    visibility: hidden;
}

.mark {
    position: absolute;
}

.indent {
    left: 137px;
    top: -3px;
}

.stop {
    left: 478px;
    top: 11px;
}

.right {
    right: 129px;
    top: 8px;
}

.page {
    flex: 1;
    width: 950px;
    padding-top: 86px;
    background-color: #fff;
    border: 1px solid #c6c6c6;
    border-bottom: none;
}

.corners {
    display: flex;
    justify-content: space-between;
    padding: 0 114px 0 115px;
}

.corners i {
    width: 28px;
    height: 28px;
    border: 0 solid #a6a6a6;
}

.corners .left {
    border-width: 0 1px 1px 0;
}

.corners .right {
    border-width: 0 0 1px 1px;
}

.content {
    padding: 25px 132px 0 143px;
    color: #000;
}

.content svg {
    color: #888;
}

.content h1 {
    position: relative;
    display: flex;
    align-items: center;
    margin: 0 0 4px;
    height: 39px;
    font-size: 25px;
    font-weight: 300;
    line-height: 39px;
    color: #2e74b5;
}

.bullet {
    position: absolute;
    left: -10px;
    top: 7px;
    width: 5px;
    height: 5px;
    background-color: #000;
}

.toc,
.content p {
    display: flex;
    align-items: center;
    height: 25px;
    margin: 0;
    font-size: 17px;
    line-height: 25px;
}

.toc a {
    font-family: "Noto Sans CJK SC", sans-serif;
    font-weight: 300;
}

.sub {
    padding-left: 34px;
}

.dots {
    flex: 1;
    min-width: 0;
    text-align: right;
    white-space: nowrap;
    font-size: 16px;
}

.dots.gap {
    margin-left: 3px;
}

.num {
    margin: 2px 1px 0 3px;
    font-family: Lato, sans-serif;
    font-size: 15px;
}

.content .far {
    padding-left: 230px;
}

/* status bar */
.status {
    flex: none;
    height: 22px;
    display: flex;
    align-items: center;
    gap: 20px;
    padding-left: 8px;
    background-color: #f3f3f3;
    border-top: 1px solid #c6c6c6;
    color: #444;
}

.views {
    margin-left: auto;
    display: flex;
}

.views button {
    width: 40px;
    height: 21px;
}

.views .on {
    background-color: #c6c6c6;
}

.zoom {
    display: flex;
    align-items: center;
    gap: 5px;
    margin-left: -14px;
    padding-right: 8px;
}

.zoom input {
    appearance: none;
    width: 100px;
    height: 12px;
    margin: 0;
    background: linear-gradient(#b0b0b0, #b0b0b0) center / 100% 1px no-repeat;
}

.zoom input::-webkit-slider-thumb {
    appearance: none;
    width: 5px;
    height: 11px;
    background-color: #666;
}

.percent {
    margin-left: 7px;
    width: 33px;
    text-align: right;
}

.taskbar {
    flex: none;
    height: 8px;
    overflow: hidden;
    background-color: #1c1e23;
}

.taskbar svg {
    display: block;
}

/* overlays */
.arrow {
    position: absolute;
    left: 190px;
    top: 63px;
}

.watermark {
    position: absolute;
    right: 75px;
    bottom: 28px;
}

.wm {
    fill: rgba(255, 255, 255, 0.8);
    stroke: rgba(130, 130, 130, 0.4);
    stroke-width: 6px;
    paint-order: stroke;
}

.wm-bai {
    font: bold 172px "Liberation Sans", sans-serif;
}

.wm-du {
    font: bold 110px "Liberation Sans", sans-serif;
    fill: #e2e2e2;
}

.wm-cn {
    font: bold 132px "Noto Sans CJK SC", sans-serif;
}

.wm-url {
    font: 89px "Noto Sans", sans-serif;
}
```
